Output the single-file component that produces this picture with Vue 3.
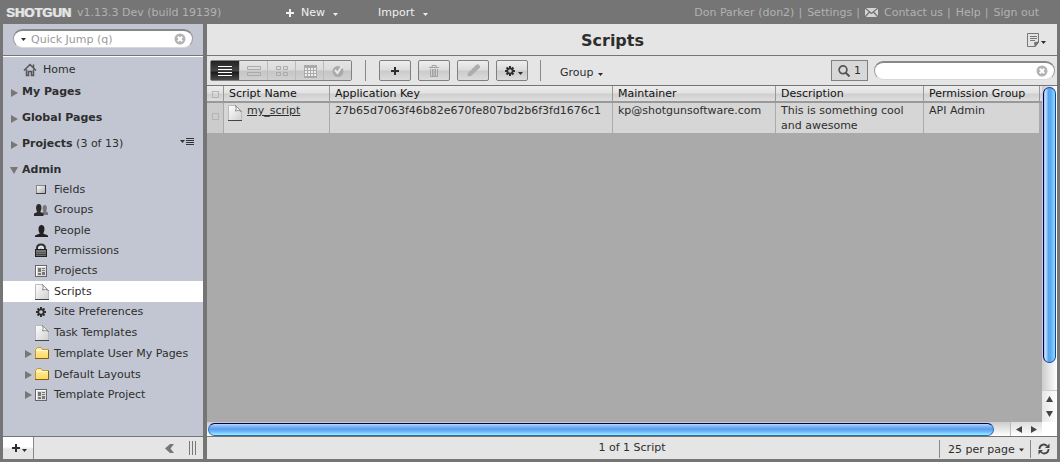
<script setup>
import { ref } from 'vue'

const jump = ref('')
const query = ref('')
const pageSize = ref('25')

const sections = [
  { label: 'My Pages' },
  { label: 'Global Pages' },
  { label: 'Projects', count: '(3 of 13)', menu: true },
  { label: 'Admin', open: true },
]

const adminItems = [
  { label: 'Fields', icon: 'field' },
  { label: 'Groups', icon: 'groups' },
  { label: 'People', icon: 'person', tall: true },
  { label: 'Permissions', icon: 'lock' },
  { label: 'Projects', icon: 'project' },
  { label: 'Scripts', icon: 'page', tall: true, active: true },
  { label: 'Site Preferences', icon: 'gear' },
  { label: 'Task Templates', icon: 'page', tall: true },
  { label: 'Template User My Pages', icon: 'folder', tall: true, branch: true },
  { label: 'Default Layouts', icon: 'folder', tall: true, branch: true },
  { label: 'Template Project', icon: 'project', branch: true },
]

const views = [
  { name: 'List view', icon: 'v-list' },
  { name: 'Row view', icon: 'v-rows' },
  { name: 'Thumbnail view', icon: 'v-thumbs' },
  { name: 'Calendar view', icon: 'v-cal' },
  { name: 'Task view', icon: 'v-check' },
]

const scripts = [
  {
    name: 'my_script',
    key: '27b65d7063f46b82e670fe807bd2b6f3fd1676c1',
    maintainer: 'kp@shotgunsoftware.com',
    description: 'This is something cool and awesome',
    group: 'API Admin',
  },
]
</script>

<template>
  <svg class="sprite" width="0" height="0" aria-hidden="true">
    <defs>
      <linearGradient id="g-paper" x1="0" y1="0" x2="1" y2="1">
        <stop offset="0" stop-color="#fff" /><stop offset="1" stop-color="#cfcfcf" />
      </linearGradient>
      <linearGradient id="g-folder" x1="0" y1="0" x2="0" y2="1">
        <stop offset="0" stop-color="#fff3b0" /><stop offset="1" stop-color="#ffd75e" />
      </linearGradient>
      <linearGradient id="g-field" x1="0" y1="0" x2="1" y2="1">
        <stop offset="0" stop-color="#fff" /><stop offset="1" stop-color="#aaa" />
      </linearGradient>
      <linearGradient id="g-lock" x1="0" y1="0" x2="0" y2="1">
        <stop offset="0" stop-color="#777" /><stop offset="1" stop-color="#2a2a2a" />
      </linearGradient>
    </defs>
    <symbol id="down" viewBox="0 0 5 3"><path d="M0 0H5L2.500 3Z" fill="currentColor" /></symbol>
    <symbol id="tri" viewBox="0 0 7 8"><path d="M0 0L7 4L0 8Z" fill="#777" /></symbol>
    <symbol id="tri-open" viewBox="0 0 8 7"><path d="M0 0H8L4 7Z" fill="#777" /></symbol>
    <symbol id="clear" viewBox="0 0 12 12">
      <circle cx="6" cy="6" r="5.500" fill="#b3b3b3" />
      <path d="M3.800 3.800L8.200 8.200M8.200 3.800L3.800 8.200" stroke="#fff" stroke-width="2" />
    </symbol>
    <symbol id="plus" viewBox="0 0 8 8"><path d="M4 0V8M0 4H8" stroke="currentColor" stroke-width="2" /></symbol>
    <symbol id="home" viewBox="0 0 14 14">
      <path d="M1 7.500L7 1.500L13 7.500M3.500 6.500V12.500H5.500V8.500H8.500V12.500H10.500V6.500M10.500 4.500V1.500" fill="none" stroke="#555" stroke-width="1.500" />
    </symbol>
    <symbol id="field" viewBox="0 0 16 16">
      <rect x="3.500" y="3.500" width="9" height="8" fill="url(#g-field)" stroke="#888" />
      <path d="M3 11.500H12.500V3" fill="none" stroke="#3a3a3a" />
    </symbol>
    <symbol id="groups" viewBox="0 0 16 16">
      <path d="M9 13V10.500L10.500 9.500C9.300 7 9.200 3 11.800 3S14.200 7 13 9.500L15 10.500V13Z" fill="#777" />
      <path d="M1 14V11.500L4.300 10C2.400 7 2.600 2 5.800 2S9.200 7 7.300 10L10.500 11.500V14Z" fill="#2a2a2a" />
    </symbol>
    <symbol id="person" viewBox="0 0 16 16">
      <path d="M2 14V12.500L6.800 10.500C4.900 7.500 4.800 2 8.500 2S12.100 7.500 10.200 10.500L15 12.500V14Z" fill="#222" />
    </symbol>
    <symbol id="lock" viewBox="0 0 16 16">
      <path d="M4 8V5Q4 1.500 8 1.500T12 5V8" fill="none" stroke="#333" stroke-width="2" />
      <path d="M6 7V5Q6 3.500 8 3.500T10 5V7" fill="none" stroke="#fff" />
      <rect x="2.500" y="6.500" width="11" height="7" fill="url(#g-lock)" stroke="#222" />
      <path d="M3 8.500H13M3 10.500H13M3 12.500H13" stroke="#888" stroke-width="0.700" />
    </symbol>
    <symbol id="project" viewBox="0 0 16 16">
      <rect x="2.500" y="2.500" width="11" height="11" fill="#ddd" stroke="#666" />
      <path d="M3 3.500H13M3.500 3V13" stroke="#fff" />
      <path d="M5 5H8V9H5ZM9 5H12V6H9ZM9 7H12V8H9ZM5 10H8V12H5ZM9 9H12V12H9Z" fill="#777" />
    </symbol>
    <symbol id="page" viewBox="0 0 16 16">
      <path d="M2.500 0.500H10L15.500 6V15.500H2.500Z" fill="url(#g-paper)" />
      <path d="M2.500 15V0.500H10M15.500 6V15" fill="none" stroke="#bbb" />
      <path d="M9.500 0.500Q11 3 9.500 6Q13 4.500 15.500 6.500Z" fill="#f8f8f8" stroke="#777" stroke-width="0.800" />
      <path d="M2 15.500H16" stroke="#444" />
    </symbol>
    <symbol id="gear" viewBox="0 0 16 16">
      <g stroke="currentColor" stroke-width="2"><path d="M8 3V13M3 8H13M4.500 4.500L11.500 11.500M11.500 4.500L4.500 11.500" /></g>
      <circle cx="8" cy="8" r="3.500" fill="currentColor" />
      <circle cx="8" cy="8" r="1.800" fill="#ccc" />
    </symbol>
    <symbol id="folder" viewBox="0 0 16 16">
      <path d="M2.500 12.500V3.500L4.500 1.500H8L9.500 3.500H15.500V12.500Z" fill="url(#g-folder)" stroke="#c59528" />
      <path d="M3 4.500H14.500" stroke="#fffbe0" /><path d="M2 12.500H15.500V4" fill="none" stroke="#86600c" />
    </symbol>
    <symbol id="mail" viewBox="0 0 13 9">
      <rect width="13" height="9" fill="#d4d4d4" /><path d="M0 0L6.500 5.500L13 0M0 9L4.500 4M13 9L8.500 4" fill="none" stroke="#707070" stroke-width="1.300" />
    </symbol>
    <symbol id="note" viewBox="0 0 13 14">
      <path d="M0.500 0.500H11.500V9.500L8 13.500H0.500Z" fill="#e4e4e4" stroke="#777" />
      <path d="M3 3.500H10M3 5.500H10M3 7.500H8" stroke="#777" /><path d="M11.500 9L8 13.500L7.500 9.500Z" fill="#777" stroke="#555" stroke-width="0.600" />
    </symbol>
    <symbol id="v-list" viewBox="0 0 16 14"><path d="M1 2.500H15M1 5.500H15M1 8.500H15M1 11.500H15" stroke="#fff" /></symbol>
    <symbol id="v-rows" viewBox="0 0 16 14"><path d="M1.500 2.500H14.500V5.500H1.500ZM1.500 8.500H14.500V11.500H1.500Z" fill="none" stroke="#aaa" /></symbol>
    <symbol id="v-thumbs" viewBox="0 0 16 14"><path d="M2.500 2.500H6.500V5.500H2.500ZM9.500 2.500H13.500V5.500H9.500ZM2.500 8.500H6.500V11.500H2.500ZM9.500 8.500H13.500V11.500H9.500Z" fill="none" stroke="#aaa" /></symbol>
    <symbol id="v-cal" viewBox="0 0 16 14">
      <path d="M2 1H15V14H2Z" fill="#aaa" /><path d="M3 4H5V6H3ZM6 4H8V6H6ZM9 4H11V6H9ZM12 4H14V6H12ZM3 7H5V9H3ZM6 7H8V9H6ZM9 7H11V9H9ZM12 7H14V9H12ZM3 10H5V12H3ZM6 10H8V12H6ZM9 10H11V12H9ZM12 10H14V12H12Z" fill="#eee" />
    </symbol>
    <symbol id="v-check" viewBox="0 0 16 14"><circle cx="8" cy="7.500" r="5.500" fill="#aaa" /><path d="M5 6L7.500 9L12 2" fill="none" stroke="#e8e8e8" stroke-width="2" /></symbol>
    <symbol id="trash" viewBox="0 0 12 12"><path d="M1 2.500H11M4 2V0.500H8V2M2.500 4V11.500H9.500V4M4.500 4V11M6 4V11M7.500 4V11" fill="none" stroke="#a2a2a2" /></symbol>
    <symbol id="pencil" viewBox="0 0 13 13"><path d="M0.500 12.500L1 9L9 1Q11 -0.500 12.500 1.500T12 4.500L4 12Z" fill="#adadad" /></symbol>
    <symbol id="lens" viewBox="0 0 12 12"><circle cx="5" cy="4.800" r="3.900" fill="none" stroke="#555" stroke-width="1.700" /><path d="M7.500 7.500L11.500 11.500" stroke="#555" stroke-width="2" /></symbol>
    <symbol id="project-menu" viewBox="0 0 14 8"><path d="M0 2H5L2.500 5Z" fill="#333" /><path d="M6 0.500H14M6 2.500H14M6 4.500H14M6 6.500H14" stroke="#333" /></symbol>
    <symbol id="collapse" viewBox="0 0 9 9"><path d="M5 0H9L5.500 4.500L9 9H5L0 4.500Z" fill="#777" /></symbol>
    <symbol id="refresh" viewBox="0 0 12 12">
      <path d="M1.500 6A4.300 4.300 0 0 1 9 3M10.500 6A4.300 4.300 0 0 1 3 9" fill="none" stroke="#444" stroke-width="1.800" />
      <path d="M11.500 0.500V5H7ZM0.500 11.500V7H5Z" fill="#444" />
    </symbol>
    <symbol id="arrow" viewBox="0 0 7 6"><path d="M3.500 0L7 6H0Z" fill="#444" /></symbol>
    <symbol id="arrow-side" viewBox="0 0 6 7"><path d="M0 3.500L6 0V7Z" fill="#444" /></symbol>
  </svg>

  <div class="app">
    <header class="top">
      <div class="brand"><strong>SHOTGUN</strong><span>v1.13.3 Dev (build 19139)</span></div>
      <button class="top-menu new" type="button"><svg width="8" height="8"><use href="#plus" /></svg>New<svg class="caret" width="5" height="3"><use href="#down" /></svg></button>
      <button class="top-menu" type="button">Import<svg class="caret" width="5" height="3"><use href="#down" /></svg></button>
      <nav class="account">
        <a href="#user">Don Parker (don2)</a><i>|</i><a href="#settings">Settings</a><i>|</i><a href="#contact"><svg width="13" height="9"><use href="#mail" /></svg>Contact us</a><i>|</i><a href="#help">Help</a><i>|</i><a href="#signout">Sign out</a>
      </nav>
    </header>

    <div class="body">
      <aside class="side">
        <div class="jump">
          <label class="pill">
            <svg class="pill-caret" width="5" height="3"><use href="#down" /></svg>
            <input v-model="jump" type="text" placeholder="Quick Jump (q)" aria-label="Quick Jump">
            <svg width="12" height="12"><use href="#clear" /></svg>
          </label>
        </div>
        <nav class="tree">
          <a class="home" href="#home"><svg width="14" height="14"><use href="#home" /></svg>Home</a>
          <div v-for="s in sections" :key="s.label" class="section">
            <svg v-if="s.open" class="open" width="8" height="7"><use href="#tri-open" /></svg>
            <svg v-else width="7" height="8"><use href="#tri" /></svg>
            <a :href="'#' + s.label"><b>{{ s.label }}</b> {{ s.count }}</a>
            <button v-if="s.menu" type="button" class="section-menu" aria-label="Project options"><svg width="14" height="8"><use href="#project-menu" /></svg></button>
          </div>
          <ul>
            <li v-for="item in adminItems" :key="item.label" :class="{ tall: item.tall, active: item.active }">
              <span class="branch"><svg v-if="item.branch" width="7" height="8"><use href="#tri" /></svg></span>
              <a :href="'#' + item.icon"><svg width="16" height="16"><use :href="'#' + item.icon" /></svg>{{ item.label }}</a>
            </li>
          </ul>
        </nav>
        <footer class="side-foot">
          <button class="add" type="button" aria-label="Add"><svg width="8" height="8"><use href="#plus" /></svg><svg class="low" width="5" height="3"><use href="#down" /></svg></button>
          <button class="collapse" type="button" aria-label="Collapse"><svg width="9" height="9"><use href="#collapse" /></svg></button>
          <span class="grip"></span>
        </footer>
      </aside>

      <main class="main">
        <div class="title">
          <h1>Scripts</h1>
          <button type="button" aria-label="Page options"><svg width="13" height="14"><use href="#note" /></svg><svg class="low" width="5" height="3"><use href="#down" /></svg></button>
        </div>

        <div class="tools">
          <div class="views">
            <button v-for="(v, i) in views" :key="v.name" type="button" :aria-label="v.name" :class="{ on: i === 0 }"><svg width="16" height="14"><use :href="'#' + v.icon" /></svg></button>
          </div>
          <span class="rule"></span>
          <div class="actions">
            <button type="button" aria-label="Add script"><svg width="8" height="8"><use href="#plus" /></svg></button>
            <button type="button" aria-label="Delete"><svg width="12" height="12"><use href="#trash" /></svg></button>
            <button type="button" aria-label="Edit"><svg width="13" height="13"><use href="#pencil" /></svg></button>
            <button type="button" aria-label="More"><svg width="16" height="16"><use href="#gear" /></svg><svg class="low" width="5" height="3"><use href="#down" /></svg></button>
          </div>
          <span class="rule second"></span>
          <button class="group" type="button">Group<svg width="5" height="3"><use href="#down" /></svg></button>
          <button class="filter" type="button"><svg width="12" height="12"><use href="#lens" /></svg>1</button>
          <label class="pill search"><input v-model="query" type="text" aria-label="Search scripts"><svg width="12" height="12"><use href="#clear" /></svg></label>
        </div>

        <div class="grid">
          <div class="view">
            <table>
              <colgroup><col class="c-check"><col class="c-name"><col class="c-key"><col class="c-who"><col class="c-desc"><col class="c-group"><col></colgroup>
              <thead>
                <tr>
                  <th><input type="checkbox" aria-label="Select all"></th>
                  <th>Script Name</th><th>Application Key</th><th>Maintainer</th><th>Description</th><th>Permission Group</th><th class="rest"></th>
                </tr>
              </thead>
              <tbody>
                <tr v-for="s in scripts" :key="s.key">
                  <td class="check"><input type="checkbox" :aria-label="'Select ' + s.name"></td>
                  <td class="name"><a href="#script"><svg width="16" height="16"><use href="#page" /></svg><span>{{ s.name }}</span></a></td>
                  <td>{{ s.key }}</td><td>{{ s.maintainer }}</td><td>{{ s.description }}</td><td>{{ s.group }}</td><td class="rest"></td>
                </tr>
              </tbody>
            </table>
          </div>
          <div class="vbar">
            <div class="vtrack"><div class="vthumb"></div></div>
            <button type="button" aria-label="Scroll up"><svg width="7" height="6"><use href="#arrow" /></svg></button>
            <button type="button" aria-label="Scroll down"><svg class="flip" width="7" height="6"><use href="#arrow" /></svg></button>
          </div>
          <div class="hbar">
            <div class="htrack"><div class="hthumb"></div></div>
            <button type="button" aria-label="Scroll left"><svg width="6" height="7"><use href="#arrow-side" /></svg></button>
            <button type="button" aria-label="Scroll right"><svg class="flip" width="6" height="7"><use href="#arrow-side" /></svg></button>
          </div>
          <div class="corner"></div>
        </div>

        <footer class="status">
          <span></span>
          <span>1 of 1 Script</span>
          <div class="paging">
            <label><select v-model="pageSize" aria-label="Rows per page"><option value="25">25 per page</option><option value="50">50 per page</option></select><svg width="5" height="4"><use href="#down" /></svg></label>
            <button type="button" aria-label="Refresh"><svg width="12" height="12"><use href="#refresh" /></svg></button>
          </div>
        </footer>
      </main>
    </div>
  </div>
</template>

<style>
body { background: #757575; }
</style>

<style scoped>
.sprite { position: absolute; }
.app { display: flex; flex-direction: column; height: 100vh; box-sizing: border-box; padding: 0 3px 3px; background: #757575; color: #2e2e2e; font: 11px/14px "DejaVu Sans", Verdana, sans-serif; }
.app * { box-sizing: border-box; }
button, input, select { font: inherit; color: inherit; margin: 0; padding: 0; border: 0; background: none; outline: 0; }
button { display: flex; align-items: center; justify-content: center; }
a { color: inherit; text-decoration: none; }
svg { flex: none; display: block; }
.low { margin: 5px 0 0 2px; }
.flip { transform: rotate(180deg); }

.top { display: flex; align-items: center; height: 24px; flex: none; padding-top: 1px; color: #b2b2b2; }
.brand { display: flex; align-items: center; gap: 6px; width: 283px; padding-left: 3px; white-space: nowrap; }
.brand strong { font: bold 13px/14px "Liberation Sans", Arial, sans-serif; color: #e6e6e6; text-shadow: 1px 0 #cfcfcf; }
.top-menu { color: #f0f0f0; margin-right: 40px; }
.new { gap: 7px; }
.caret { margin: 3px 0 0 8px; }
.new .caret { margin-left: 1px; }
.account { display: flex; margin-left: auto; padding-right: 18px; white-space: nowrap; }
.account a { display: flex; align-items: center; gap: 6px; }
.account i { font-style: normal; margin: 0 5px 0 4px; }

.body { display: flex; flex: 1; gap: 4px; min-height: 0; }
.side { width: 200px; flex: none; display: flex; flex-direction: column; background: #c2c6d2; }
.jump { height: 32px; flex: none; padding: 5px 10px 0; border-bottom: 1px solid #757575; }
.pill { display: flex; align-items: center; height: 19px; padding: 0 6px 0 7px; border: 1px solid #999; border-top: 2px solid #888; border-bottom-color: #d8d8d8; border-radius: 10px; background: #fff; }
.pill input { flex: 1; min-width: 0; height: 15px; }
.pill input::placeholder { color: #999; opacity: 1; }
.pill-caret { margin-right: 5px; }
.tree { flex: 1; border-top: 1px solid #fff; white-space: nowrap; }
.home { display: flex; align-items: center; gap: 6px; height: 22px; padding: 3px 0 0 20px; }
.section { display: flex; align-items: center; gap: 4px; height: 26px; padding: 0 9px 0 8px; }
.section > svg { margin-top: 1px; }
.section > .open { margin-left: -1px; }
.section-menu { margin-left: auto; padding-bottom: 4px; }
ul { list-style: none; margin: -3px 0 0; padding: 0; }
li { display: flex; align-items: center; height: 20px; padding-left: 22px; }
li a { display: flex; align-items: center; gap: 5px; }
.branch { width: 8px; }
.tall { height: 21px; }
.active { background: #fff; }
.side-foot, .status { height: 23px; flex: none; border-top: 1px solid #757575; background: #e5e5e5; }
.side-foot { display: flex; align-items: center; padding-right: 6px; }
.add { width: 31px; height: 22px; padding-left: 2px; border-right: 1px solid #888; background: linear-gradient(#fff 45%, #e5e5e5 55%); }
.collapse { margin-left: auto; }
.grip { width: 8px; height: 14px; margin-left: 15px; background: repeating-linear-gradient(90deg, #777 0 1px, transparent 1px 3px); }

.main { flex: 1; min-width: 0; display: flex; flex-direction: column; background: #e5e5e5; }
.title { display: flex; align-items: center; height: 32px; flex: none; padding-right: 11px; border-bottom: 1px solid #757575; }
.title .low { margin-left: 1px; }
h1 { flex: 1; margin: 0; padding: 2px 9px 0 0; font-size: 16px; line-height: 20px; text-align: center; }
.tools { display: flex; align-items: center; height: 30px; flex: none; padding: 0 2px 0 3px; border-bottom: 1px solid #757575; }
.views { display: flex; border: 1px solid #808080; border-radius: 2px; }
.views button { width: 28px; height: 19px; border-left: 1px solid #bbb; background: linear-gradient(#e4e4e4, #dcdcdc 45%, #c6c6c6 55%, #d0d0d0); }
.views .on { background: linear-gradient(#222, #444 50%, #1c1c1c 60%, #4a4a4a); border-left: 0; }
.rule { width: 1px; height: 21px; margin: 0 13px; background: #888; }
.second { margin: 0 19px 0 12px; }
.actions { display: flex; gap: 7px; }
.actions button { width: 32px; height: 21px; border: 1px solid #808080; border-radius: 2px; background: linear-gradient(#eee, #ddd 45%, #cbcbcb 55%, #dcdcdc); }
.actions .low { margin-left: 0; }
.group { gap: 4px; padding-top: 5px; }
.group svg { margin-top: 3px; }
.filter { gap: 4px; width: 37px; height: 21px; margin-left: auto; border: 1px solid #808080; background: #d8d8d8; }
.search { width: 181px; margin-left: 6px; }

.grid { flex: 1; min-height: 0; display: grid; grid-template: minmax(0, 1fr) 14px / minmax(0, 1fr) 15px; background: #aaa; }
.view { overflow: hidden; }
table { width: 100%; table-layout: fixed; border-collapse: separate; border-spacing: 0; }
.c-check { width: 17px; }
.c-name { width: 106px; }
.c-key { width: 283px; }
.c-who { width: 163px; }
.c-desc { width: 148px; }
.c-group { width: 116px; }
th { height: 17px; padding: 1px 0 0 5px; border-right: 1px solid #999; border-bottom: 2px solid #999; background: linear-gradient(#ececec, #e2e2e2 45%, #cfcfcf 55%, #dedede); text-align: left; font-weight: normal; white-space: nowrap; color: #111; }
td { height: 30px; padding: 0 5px; border-right: 1px solid #aaa; background: #d6d6d6; vertical-align: top; line-height: 15px; }
td.rest, th.rest { border-right: 0; padding: 0; }
td.rest { background: #aaa; }
td.check { padding-bottom: 3px; vertical-align: middle; background: #ccc; }
td.name { padding: 2px 0 0 2px; }
.name a { display: flex; gap: 5px; text-decoration: underline; }
.name span { margin-top: -2px; }
input[type="checkbox"] { display: block; appearance: none; width: 7px; height: 7px; border: 1px solid #b4b4b4; }
.vbar { display: flex; flex-direction: column; background: linear-gradient(90deg, #ccc, #fff); }
.vtrack { flex: 1; padding: 1px 1px 0; }
.vthumb { height: 91%; border: 1px solid #1a3f9e; border-left-color: #00006a; border-radius: 7px; background: linear-gradient(90deg, #8fbff0, #c4e0fa 15%, #5da4ee 40%, #5aa8f5 60%, #8ae0ff); }
.vbar button { height: 16px; border-top: 1px solid #ccc; background: linear-gradient(90deg, #e6e6e6, #fff); }
.vbar button + button { border-top: 0; }
.hbar { display: flex; background: linear-gradient(#ccc, #fff); }
.htrack { flex: 1; padding: 1px 0 0 1px; }
.hthumb { width: 98%; height: 13px; border: 1px solid #2e6bb5; border-top-color: #00005a; border-radius: 7px; background: linear-gradient(#b8d8f8, #7ab4f2 25%, #5c9df0 45%, #68b0f8 65%, #9af0ff); }
.hbar button { width: 16px; border-left: 1px solid #bbb; background: linear-gradient(#ddd, #fff); }
.hbar button + button { border-left: 0; }
.corner { background: #fff; }

.status { display: grid; grid-template-columns: 1fr auto 1fr; align-items: center; }
.paging { display: flex; justify-self: end; align-items: center; height: 18px; margin-top: 2px; }
.paging label { display: flex; align-items: center; gap: 4px; height: 18px; padding: 2px 6px 0 8px; border-left: 1px solid #888; border-right: 1px solid #888; }
select { appearance: none; }
.paging button { width: 26px; height: 18px; }
</style>
